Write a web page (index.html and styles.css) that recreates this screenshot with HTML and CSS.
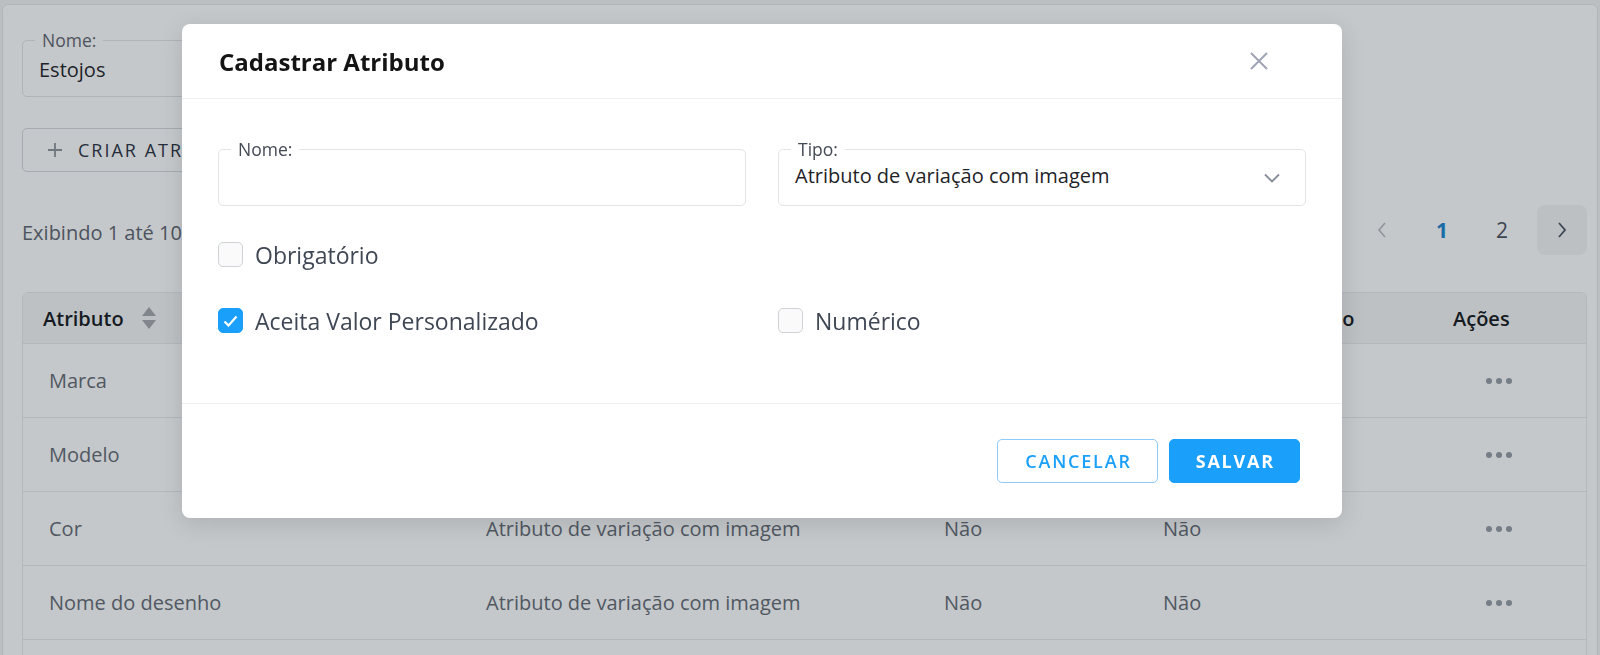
FILE: index.html
```html
<!DOCTYPE html>
<html lang="pt-BR">
<head>
<meta charset="UTF-8" />
<title>Atributos</title>
<link rel="stylesheet" href="styles.css">
</head>
<body>
  <div class="card">
    <div class="field field-page">
      <span class="field-label">Nome:</span>
      <span class="field-value">Estojos</span>
    </div>

    <button class="btn-create">
      <svg width="16" height="16" viewBox="0 0 16 16"><path d="M8 1v14M1 8h14" stroke="currentColor" stroke-width="1.8" fill="none"/></svg>
      CRIAR ATRIBUTO
    </button>

    <div class="list-bar">
      <span class="list-info">Exibindo 1 até 10 de 12 registros</span>
      <nav class="pager">
        <span class="pager-item disabled">
          <svg width="10" height="16" viewBox="0 0 10 16"><path d="M8 1L2 8l6 7" stroke="currentColor" stroke-width="1.6" fill="none"/></svg>
        </span>
        <span class="pager-item current">1</span>
        <span class="pager-item">2</span>
        <span class="pager-item next">
          <svg width="10" height="16" viewBox="0 0 10 16"><path d="M2 1l6 7-6 7" stroke="currentColor" stroke-width="1.8" fill="none"/></svg>
        </span>
      </nav>
    </div>

    <div class="table">
      <div class="tr thead">
        <div class="th">Atributo
          <svg class="sort" width="16" height="24" viewBox="0 0 16 24"><path d="M8 1l7 9H1z M8 23l7-9H1z" fill="currentColor"/></svg>
        </div>
        <div class="th">Tipo</div>
        <div class="th">Obrigatório</div>
        <div class="th">Valor Personalizado</div>
        <div class="th">Ações</div>
      </div>
      <div class="tr">
        <div class="td">Marca</div>
        <div class="td">Atributo simples</div>
        <div class="td">Não</div>
        <div class="td">Sim</div>
        <div class="td actions"><svg width="26" height="6" viewBox="0 0 26 6"><circle cx="3" cy="3" r="3"/><circle cx="13" cy="3" r="3"/><circle cx="23" cy="3" r="3"/></svg></div>
      </div>
      <div class="tr">
        <div class="td">Modelo</div>
        <div class="td">Atributo simples</div>
        <div class="td">Não</div>
        <div class="td">Sim</div>
        <div class="td actions"><svg width="26" height="6" viewBox="0 0 26 6"><circle cx="3" cy="3" r="3"/><circle cx="13" cy="3" r="3"/><circle cx="23" cy="3" r="3"/></svg></div>
      </div>
      <div class="tr">
        <div class="td">Cor</div>
        <div class="td">Atributo de variação com imagem</div>
        <div class="td">Não</div>
        <div class="td">Não</div>
        <div class="td actions"><svg width="26" height="6" viewBox="0 0 26 6"><circle cx="3" cy="3" r="3"/><circle cx="13" cy="3" r="3"/><circle cx="23" cy="3" r="3"/></svg></div>
      </div>
      <div class="tr">
        <div class="td">Nome do desenho</div>
        <div class="td">Atributo de variação com imagem</div>
        <div class="td">Não</div>
        <div class="td">Não</div>
        <div class="td actions"><svg width="26" height="6" viewBox="0 0 26 6"><circle cx="3" cy="3" r="3"/><circle cx="13" cy="3" r="3"/><circle cx="23" cy="3" r="3"/></svg></div>
      </div>
    </div>
  </div>

  <div class="backdrop"></div>

  <div class="modal" role="dialog" aria-label="Cadastrar Atributo">
    <div class="modal-head">
      <h2>Cadastrar Atributo</h2>
      <svg class="close" width="20" height="20" viewBox="0 0 20 20"><path d="M2 2l16 16M18 2L2 18" stroke="currentColor" stroke-width="2" fill="none"/></svg>
    </div>

    <div class="modal-body">
      <div class="form-row">
        <div class="field">
          <span class="field-label">Nome:</span>
        </div>
        <div class="field select">
          <span class="field-label">Tipo:</span>
          <span class="field-value">Atributo de variação com imagem</span>
          <svg width="16" height="10" viewBox="0 0 16 10"><path d="M1 1.5l7 7 7-7" stroke="currentColor" stroke-width="1.8" fill="none"/></svg>
        </div>
      </div>

      <div class="check-grid">
        <label class="check"><span class="box"></span>Obrigatório</label>
        <div></div>
        <label class="check"><span class="box checked"><svg width="15" height="12" viewBox="0 0 15 12"><path d="M1.5 6.5l4 4 8-9" stroke="#fff" stroke-width="2.2" fill="none"/></svg></span>Aceita Valor Personalizado</label>
        <label class="check"><span class="box"></span>Numérico</label>
      </div>
    </div>

    <div class="modal-foot">
      <button class="btn btn-outline">CANCELAR</button>
      <button class="btn btn-primary">SALVAR</button>
    </div>
  </div>
</body>
</html>
```

FILE: styles.css
```css
* {
  box-sizing: border-box;
}
html, body {
  margin: 0;
  padding: 0;
  height: 100%;
  overflow: hidden;
  font-family: 'Open Sans', 'Noto Sans', sans-serif;
  background: #f2f3f5;
}

/* Page under the dialog */
.card {
  margin: 4px 2px 0;
  background: #fff;
  border: 1px solid #e4e6e9;
  border-radius: 6px;
  padding: 35px 10px 0 19px;
  height: 760px;
}
.field {
  position: relative;
  height: 57px;
  border: 1px solid #e2e4e7;
  border-radius: 5px;
  padding: 0 16px;
  display: flex;
  align-items: center;
  background: #fff;
}
.field-label {
  position: absolute;
  top: -11px;
  left: 12px;
  padding: 0 7px;
  background: #fff;
  font-size: 17.5px;
  line-height: 20px;
  color: #434955;
}
.field-value {
  font-size: 20px;
  color: #1f2328;
}
.field-page {
  width: 420px;
}
.field-page .field-label {
  color: #5f6570;
}
.field-page .field-value {
  padding-top: 1px;
}
.btn-create {
  margin-top: 31px;
  height: 44px;
  display: flex;
  align-items: center;
  gap: 15px;
  padding: 0 24px;
  border: 1px solid #d5d8dc;
  border-radius: 5px;
  background: #fff;
  font-family: inherit;
  font-size: 18px;
  letter-spacing: 2px;
  color: #283040;
}
.btn-create svg {
  color: #8d939b;
}
.list-bar {
  margin-top: 33px;
  height: 50px;
  display: flex;
  align-items: center;
  justify-content: space-between;
}
.list-info {
  font-size: 20px;
  color: #5e6470;
  padding-top: 4px;
}
.pager {
  display: flex;
  gap: 10px;
}
.pager-item {
  width: 50px;
  height: 50px;
  display: flex;
  align-items: center;
  justify-content: center;
  font-size: 21px;
  color: #4a5160;
  border-radius: 8px;
}
.pager-item.disabled {
  color: #b7bbc1;
}
.pager-item.current {
  color: #1a85d0;
  font-weight: 700;
}
.pager-item.next {
  background: #f3f4f6;
}

.table {
  margin-top: 37px;
  height: 420px;
  border: 1px solid #e8eaed;
  border-radius: 6px 6px 0 0;
}
.tr {
  display: grid;
  grid-template-columns: 437px 458px 219px 290px 1fr;
  height: 74px;
  align-items: center;
  border-bottom: 1px solid #e8eaed;
}
.thead {
  height: 51px;
  background: #f5f6f7;
}
.th {
  padding-left: 26px;
  font-size: 20px;
  font-weight: 600;
  color: #15181c;
  white-space: nowrap;
  display: flex;
  align-items: center;
}
.th:first-child {
  padding-left: 20px;
}
.sort {
  margin-left: 17px;
  color: #a4a7ac;
}
.td {
  padding-left: 26px;
  font-size: 20px;
  color: #646a75;
  white-space: nowrap;
}
.td.actions {
  padding-left: 59px;
  display: flex;
}
.td.actions svg {
  fill: #959ba5;
}

/* Dialog */
.backdrop {
  position: fixed;
  inset: 0;
  background: rgba(25, 35, 45, 0.25);
}
.modal {
  position: fixed;
  top: 24px;
  left: 182px;
  width: 1160px;
  background: #fff;
  border-radius: 8px;
  box-shadow: 0 6px 24px rgba(0, 0, 0, 0.12);
}
.modal-head {
  height: 75px;
  display: flex;
  align-items: center;
  justify-content: space-between;
  padding: 0 73px 0 37px;
  border-bottom: 1px solid #eef0f2;
}
.modal-head h2 {
  margin: 0;
  font-size: 24px;
  font-weight: 700;
  color: #141414;
}
.close {
  color: #a0a3b4;
}
.modal-body {
  padding: 50px 36px 70px;
}
.form-row {
  display: grid;
  grid-template-columns: 1fr 1fr;
  gap: 32px;
}
.select {
  justify-content: space-between;
  padding-right: 25px;
}
.select .field-value {
  padding-bottom: 4px;
}
.select svg {
  color: #868c9c;
}
.check-grid {
  margin-top: 36px;
  display: grid;
  grid-template-columns: 1fr 1fr;
  column-gap: 32px;
  row-gap: 41px;
}
.check {
  display: flex;
  align-items: center;
  gap: 12px;
  height: 25px;
  font-size: 23px;
  color: #3f4654;
}
.box {
  width: 25px;
  height: 25px;
  border: 1.5px solid #cfd2d6;
  border-radius: 5px;
  background: #fafafa;
  display: flex;
  align-items: center;
  justify-content: center;
}
.box.checked {
  background: #1a9ffa;
  border-color: #1a9ffa;
}
.modal-foot {
  border-top: 1px solid #eef0f2;
  padding: 35px 42px;
  display: flex;
  justify-content: flex-end;
  gap: 11px;
}
.btn {
  height: 44px;
  padding: 0 24px 0 26px;
  border-radius: 5px;
  font-family: inherit;
  font-size: 18px;
  font-weight: 600;
  letter-spacing: 1.8px;
}
.btn-outline {
  padding: 0 25px 0 27px;
  background: #fff;
  border: 1px solid #8ecbfa;
  color: #1a9ffa;
}
.btn-primary {
  background: #1a9ffa;
  border: 1px solid #1a9ffa;
  color: #fff;
  font-weight: 700;
}
```
